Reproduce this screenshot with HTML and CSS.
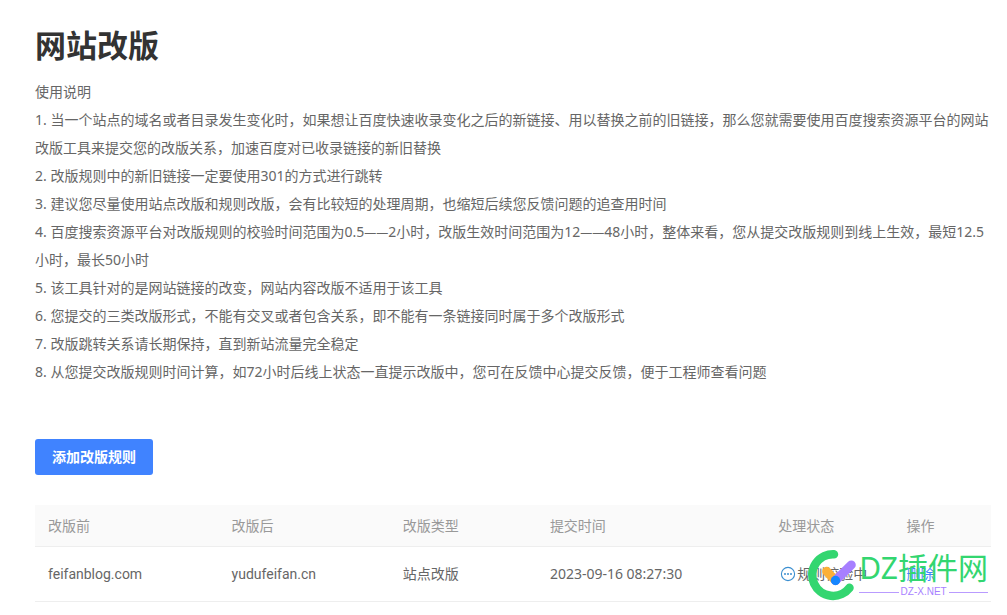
FILE: index.html
```html
<!DOCTYPE html>
<html lang="zh-CN">
<head>
<meta charset="utf-8">
<title>网站改版</title>
<link rel="stylesheet" href="styles.css">
</head>
<body>
<main class="page">
  <h1 class="title">网站改版</h1>
  <section class="notes">
    <p>使用说明</p>
    <p>1. 当一个站点的域名或者目录发生变化时，如果想让百度快速收录变化之后的新链接、用以替换之前的旧链接，那么您就需要使用百度搜索资源平台的网站改版工具来提交您的改版关系，加速百度对已收录链接的新旧替换</p>
    <p>2. 改版规则中的新旧链接一定要使用301的方式进行跳转</p>
    <p>3. 建议您尽量使用站点改版和规则改版，会有比较短的处理周期，也缩短后续您反馈问题的追查用时间</p>
    <p>4. 百度搜索资源平台对改版规则的校验时间范围为0.5<span class="dash">——</span>2小时，改版生效时间范围为12<span class="dash">——</span>48小时，整体来看，您从提交改版规则到线上生效，最短12.5小时，最长50小时</p>
    <p>5. 该工具针对的是网站链接的改变，网站内容改版不适用于该工具</p>
    <p>6. 您提交的三类改版形式，不能有交叉或者包含关系，即不能有一条链接同时属于多个改版形式</p>
    <p>7. 改版跳转关系请长期保持，直到新站流量完全稳定</p>
    <p>8. 从您提交改版规则时间计算，如72小时后线上状态一直提示改版中，您可在反馈中心提交反馈，便于工程师查看问题</p>
  </section>
  <button class="add" type="button">添加改版规则</button>
  <table class="rules">
    <colgroup><col class="c-from"><col class="c-to"><col class="c-type"><col class="c-time"><col class="c-state"><col class="c-action"></colgroup>
    <thead>
      <tr><th>改版前</th><th>改版后</th><th>改版类型</th><th>提交时间</th><th>处理状态</th><th>操作</th></tr>
    </thead>
    <tbody>
      <tr>
        <td class="domain">feifanblog.com</td><td class="domain">yudufeifan.cn</td><td>站点改版</td><td>2023-09-16 08:27:30</td>
        <td><span class="state"><svg class="state-icon" viewBox="0 0 16 16" aria-hidden="true"><circle cx="8" cy="8" r="6.6" fill="none" stroke="#3b8fd0" stroke-width="1.1"/><g fill="#3b8fd0"><circle cx="5" cy="8" r="1"/><circle cx="8" cy="8" r="1"/><circle cx="11" cy="8" r="1"/></g></svg>规则校验中</span></td>
        <td><a class="delete" href="#">删除</a></td>
      </tr>
    </tbody>
  </table>
  <div class="mark">
    <svg class="mark-logo" viewBox="0 0 52 52" aria-hidden="true">
      <path d="M27 5.300A20.800 20.800 0 1 0 42.500 38.800" fill="none" stroke="#33d670" stroke-width="8.500" stroke-linecap="round"/>
      <path d="M19.700 22.300L28.500 31.500" stroke="#fcb037" stroke-width="9" stroke-linecap="round"/>
      <path d="M28.500 31.500L44.300 15.900" stroke="#a77fff" stroke-width="9" stroke-linecap="round"/>
      <circle cx="28.500" cy="31.500" r="4.700" fill="#1687ff"/>
    </svg>
    <div class="mark-text">
      <span class="mark-name">DZ插件网</span>
      <span class="mark-site">DZ-X.NET</span>
    </div>
  </div>
</main>
</body>
</html>
```

FILE: styles.css
```css
body {
  margin: 0;
  background: #fff;
  color: #666;
  font: 14px/28px "Noto Sans", "Noto Sans CJK SC", sans-serif;
}

.page {
  position: relative;
  padding: 24px 16px 13px 35px;
}

.title {
  margin: 0 0 12px;
  color: #333;
  font-size: 31px;
  line-height: 42px;
}

.notes {
  margin-bottom: 53px;
}

.notes p {
  margin: 0;
}

.dash {
  font-size: 12px;
  line-height: 1;
}

.add {
  display: block;
  height: 36px;
  margin: 0 0 30px;
  padding: 0 17px;
  border: 0;
  border-radius: 3px;
  background: #4083ff;
  color: #fff;
  font: bold 14px/36px "Noto Sans", "Noto Sans CJK SC", sans-serif;
}

.rules {
  width: 100%;
  table-layout: fixed;
  border-collapse: separate;
  border-spacing: 0;
}

.c-from { width: 19.2%; }
.c-to { width: 17.9%; }
.c-type { width: 15.4%; }
.c-time { width: 23.9%; }
.c-state { width: 13.4%; }

.rules th,
.rules td {
  padding: 0 0 0 13px;
  border-bottom: 1px solid #eee;
  text-align: left;
  white-space: nowrap;
}

.rules th {
  height: 41px;
  background: #fafafa;
  color: #999;
  font-weight: normal;
}

.rules td {
  height: 54px;
}

.rules .domain {
  font-family: Roboto, "Noto Sans CJK SC", sans-serif;
}

.state {
  display: flex;
  align-items: center;
  gap: 1px;
  padding-left: 2px;
}

.state-icon {
  width: 16px;
  height: 16px;
}

.delete {
  color: #4083ff;
  text-decoration: none;
}

.mark {
  position: absolute;
  right: 19px;
  bottom: 14px;
  display: flex;
  pointer-events: none;
}

.mark-logo {
  width: 52px;
  height: 52px;
}

.mark-text {
  display: flex;
  flex-direction: column;
}

.mark-name {
  color: #33d670;
  font: 30px/38px "Noto Sans", "Noto Sans CJK SC", sans-serif;
}

.mark-site {
  display: flex;
  align-items: center;
  gap: 2px;
  color: #a77fff;
  font: 10px/10px "Liberation Sans", sans-serif;
}

.mark-site::before,
.mark-site::after {
  flex: 1;
  height: 1px;
  background: #b99bff;
  content: "";
}
```
